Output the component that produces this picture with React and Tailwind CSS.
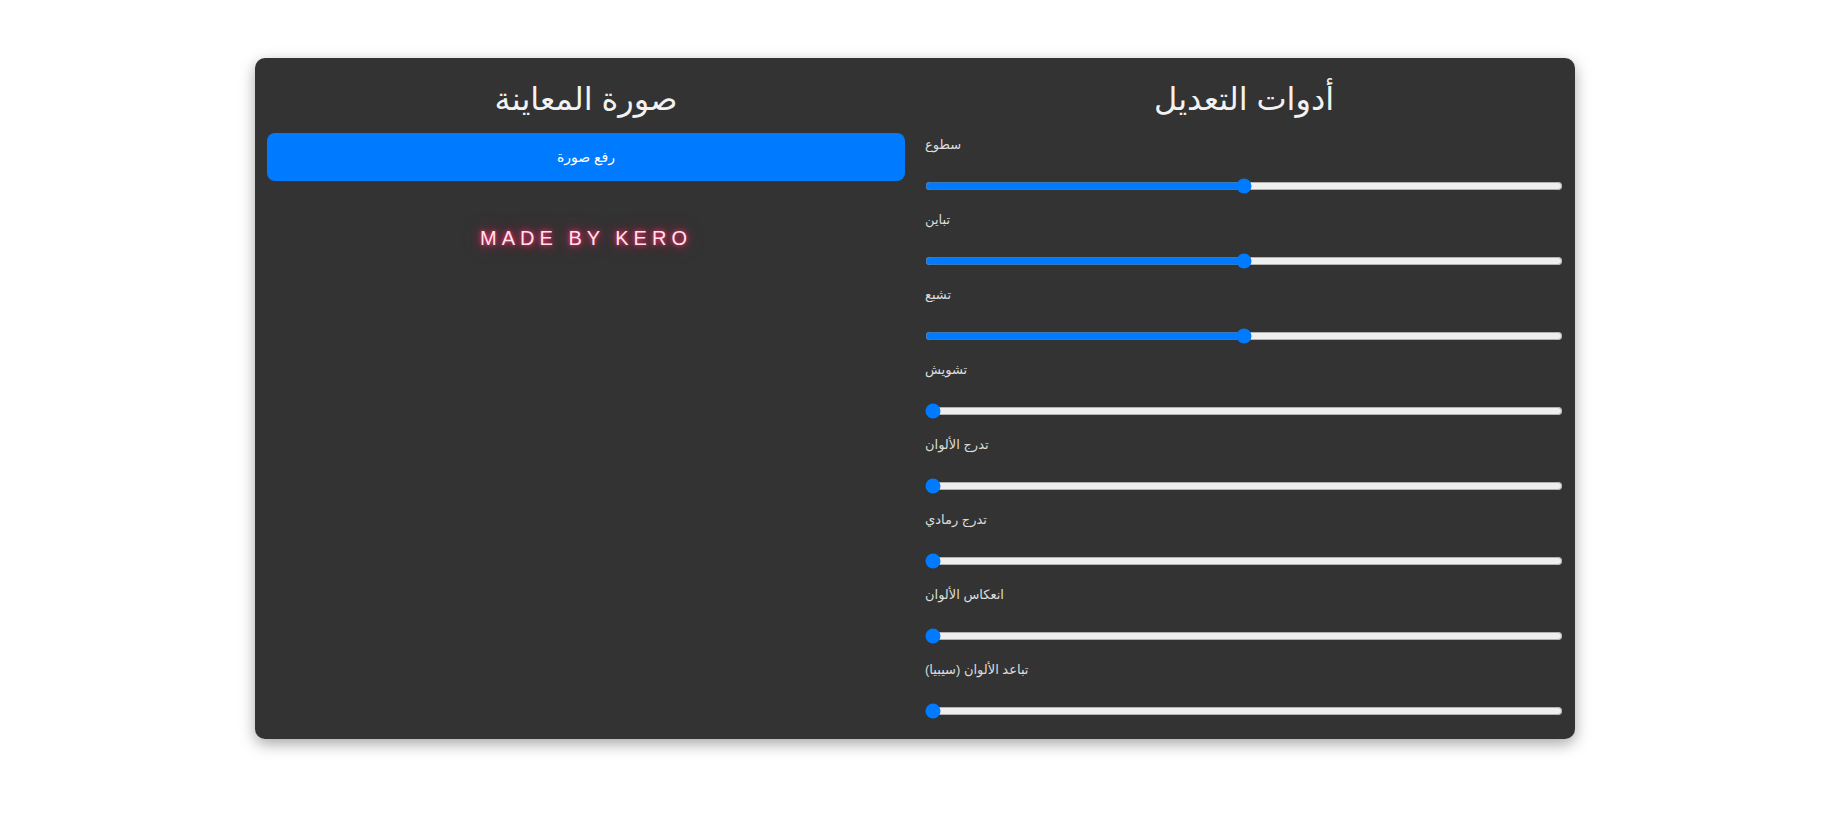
import React, { useState } from 'react';

const filters = [
  { id: 'brightness', label: 'سطوع', min: 0, max: 200, value: 100 },
  { id: 'contrast', label: 'تباين', min: 0, max: 200, value: 100 },
  { id: 'saturate', label: 'تشبع', min: 0, max: 200, value: 100 },
  { id: 'blur', label: 'تشويش', min: 0, max: 10, value: 0 },
  { id: 'hue', label: 'تدرج الألوان', min: 0, max: 360, value: 0 },
  { id: 'grayscale', label: 'تدرج رمادي', min: 0, max: 100, value: 0 },
  { id: 'invert', label: 'انعكاس الألوان', min: 0, max: 100, value: 0 },
  { id: 'sepia', label: 'تباعد الألوان (سيبيا)', min: 0, max: 100, value: 0 },
];

const App = () => {
  const [values, setValues] = useState(
    Object.fromEntries(filters.map((f) => [f.id, f.value]))
  );

  const handleChange = (id, v) => {
    setValues((prev) => ({ ...prev, [id]: Number(v) }));
  };

  return (
    <div className="min-h-[815px] bg-white pt-[58px] font-['Liberation_Sans','DejaVu_Sans',Arial,sans-serif]">
      <div className="ml-[255px] w-[1320px] bg-[#333] rounded-[10px] shadow-[0_5px_15px_rgba(0,0,0,0.35)] px-3 pt-3 pb-1 flex gap-5">
        {/* Preview */}
        <div className="flex-1 flex flex-col items-center">
          <h2 className="mt-[11px] mb-[15px] text-[32px] leading-[37px] text-[#f2f2f2]">صورة المعاينة</h2>
          <button className="w-full h-12 bg-[#007bff] text-white text-[14px] rounded-lg">
            رفع صورة
          </button>
          <p className="mt-[46px] text-[20px] leading-[23px] tracking-[5px] text-[#ffe4ec] [text-shadow:0_0_4px_#ff2d6f,0_0_10px_#e0245e,0_0_22px_rgba(255,40,100,0.35)]">
            MADE BY KERO
          </p>
        </div>

        {/* Controls */}
        <div className="flex-1 flex flex-col">
          <h2 className="mt-[11px] mb-[17px] text-[32px] leading-[37px] text-[#f2f2f2] text-center">أدوات التعديل</h2>
          {filters.map((f) => (
            <div key={f.id} className="h-[75px] shrink-0 flex flex-col">
              <label className="text-[13px] leading-[16px] text-[#ddd] mt-[2px]">{f.label}</label>
              <input
                type="range"
                min={f.min}
                max={f.max}
                value={values[f.id]}
                onChange={(e) => handleChange(f.id, e.target.value)}
                className="w-full mt-[25px] accent-[#007bff]"
              />
            </div>
          ))}
        </div>
      </div>
    </div>
  );
};

export default App;
